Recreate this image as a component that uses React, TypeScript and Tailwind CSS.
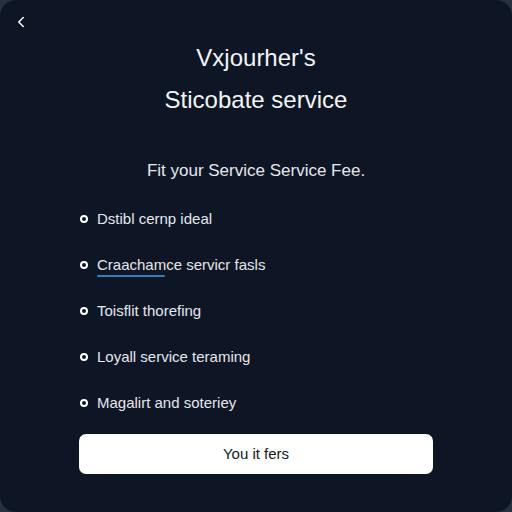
import { ChevronLeft } from 'lucide-react';

const items = [
  'Dstibl cernp ideal',
  'Craachamce servicr fasls',
  'Toisflit thorefing',
  'Loyall service teraming',
  'Magalirt and soteriey',
];

export default function App() {
  return (
    <div className="w-[512px] h-[512px] bg-[#26303f] font-['Liberation_Sans',Arial,sans-serif]">
      <div className="w-full h-full rounded-[16px] bg-[#0e1626] text-white flex flex-col relative">
        <button className="absolute left-[12px] top-[13px] text-white">
          <ChevronLeft className="w-[18px] h-[18px]" strokeWidth={2} />
        </button>

        <h1 className="text-center text-[24px] leading-none mt-[46px] text-[#f3f4f6]">Vxjourher's</h1>
        <h2 className="text-center text-[24px] leading-none mt-[18px] text-[#f3f4f6]">Sticobate service</h2>

        <p className="text-center text-[17px] leading-none mt-[50px] text-[#e5e7eb]">Fit your Service Service Fee.</p>

        <ul className="mt-[31px] ml-[80px] flex flex-col gap-[28px]">
          {items.map((item, i) => (
            <li key={item} className="flex items-center gap-[9px] text-[15px] leading-[18px] text-[#e5e7eb]">
              <span className="w-[8px] h-[8px] rounded-full border-[2px] border-white shrink-0" />
              <span className="relative">
                {item}
                {i === 1 && (
                  <span className="absolute left-0 top-[19px] w-[68px] h-[2px] bg-[#2f7fc1] rounded-full" />
                )}
              </span>
            </li>
          ))}
        </ul>

        <button className="mx-[79px] mt-[22px] h-[40px] rounded-[7px] bg-white text-[#111827] text-[15px]">
          You it fers
        </button>
      </div>
    </div>
  );
}
